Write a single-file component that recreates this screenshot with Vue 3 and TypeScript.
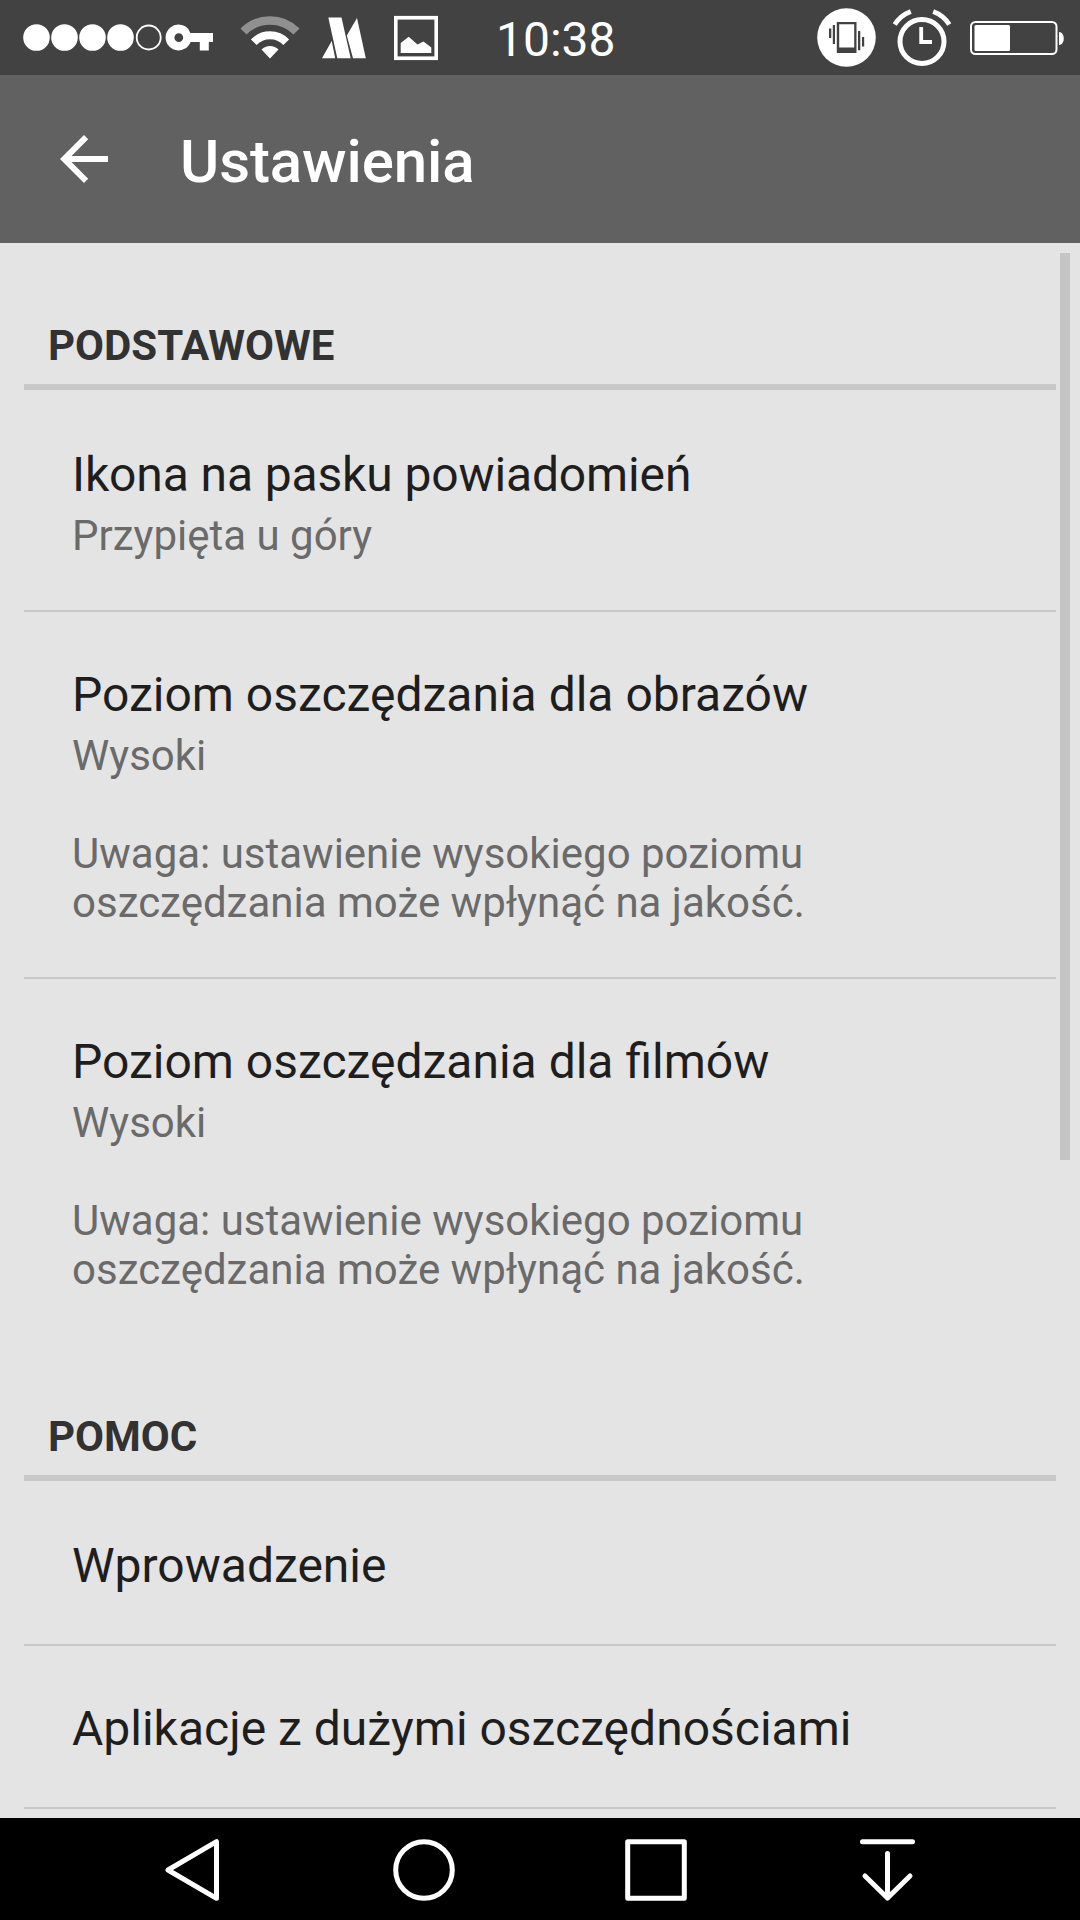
<script setup lang="ts">
interface SettingRow {
  title: string
  value?: string
  note?: string[]
  tight?: boolean
}

interface SettingSection {
  heading: string
  rows: SettingRow[]
}

const savingsNote: string[] = ['Uwaga: ustawienie wysokiego poziomu', 'oszczędzania może wpłynąć na jakość.']

const sections: SettingSection[] = [
  {
    heading: 'PODSTAWOWE',
    rows: [
      { title: 'Ikona na pasku powiadomień', value: 'Przypięta u góry', tight: true },
      { title: 'Poziom oszczędzania dla obrazów', value: 'Wysoki', note: savingsNote },
      { title: 'Poziom oszczędzania dla filmów', value: 'Wysoki', note: savingsNote },
    ],
  },
  {
    heading: 'POMOC',
    rows: [{ title: 'Wprowadzenie' }, { title: 'Aplikacje z dużymi oszczędnościami' }],
  },
]

const signalDots: number[] = [14, 42, 70, 98]
</script>

<template>
  <div class="screen">
    <div class="status">
      <svg class="signal" width="192" height="75" viewBox="0 0 192 75">
        <circle v-for="x in signalDots" :key="x" :cx="x - 0.5" cy="37.5" r="13.3" fill="#fff" />
        <circle cx="125.7" cy="37.5" r="12" fill="none" stroke="#fff" stroke-width="1.8" />
        <path
          fill="#fff"
          fill-rule="evenodd"
          d="M155.8 24.6a12.9 12.9 0 0 1 11.6 8.3H190v9h-4.2v8.6h-9v-8.6h-9.2a12.9 12.9 0 1 1-11.8-17.3zM155.8 33.2a4.4 4.4 0 1 0 0 8.8a4.4 4.4 0 0 0 0-8.8z"
        />
      </svg>
      <svg class="wifi" width="60" height="75" viewBox="0 0 60 75">
        <path d="M3.5 31.5A37.5 37.5 0 0 1 56.5 31.5" fill="none" stroke="#909090" stroke-width="8.6" />
        <path d="M13.8 42.2A22.5 22.5 0 0 1 46.2 42.2" fill="none" stroke="#fff" stroke-width="8" />
        <path d="M30 58.5L21.5 49.5A12 12 0 0 1 38.5 49.5Z" fill="#fff" />
      </svg>
      <svg class="brand" width="44" height="75" viewBox="0 0 44 75">
        <path fill="#fff" d="M0 58.3L9.7 41L13.2 58.3ZM6.3 17.5H19.5L28.7 58.3H15.3ZM24.8 35.5L35 18L43.8 58.3H31Z" />
      </svg>
      <svg class="picture" width="44" height="75" viewBox="0 0 44 75">
        <rect x="1.75" y="17.75" width="40.5" height="40.5" fill="none" stroke="#fff" stroke-width="3.7" />
        <path fill="#fff" d="M6.7 53V43L14.7 36.8L23.5 44.5L29.5 41.5L37.3 47.5V53Z" />
      </svg>
      <span class="clock">10:38</span>
      <svg class="vibrate" width="60" height="75" viewBox="0 0 60 75">
        <circle cx="29.5" cy="37.5" r="29.3" fill="#fff" />
        <path
          fill="#424242"
          fill-rule="evenodd"
          d="M19.8 22H39.5V53H19.8ZM22.2 24.3V47.5H37.2V24.3ZM15.8 25H18V44H15.8ZM12 28.5H14.3V38H12ZM41 31H43.3V50.3H41ZM45 37H47.2V46.5H45Z"
        />
      </svg>
      <svg class="alarm" width="60" height="75" viewBox="0 0 60 75">
        <g fill="none" stroke="#fff">
          <circle cx="30" cy="41.5" r="22" stroke-width="5" />
          <path d="M2.7 24.5A33 33 0 0 1 18.8 11.5M41.2 11.5A33 33 0 0 1 57.3 24.5" stroke-width="4.8" />
          <path d="M29.2 27V42H40" stroke-width="3.8" />
        </g>
      </svg>
      <svg class="battery" width="95" height="75" viewBox="0 0 95 75">
        <rect x="1" y="22" width="85.5" height="32" rx="4.5" fill="none" stroke="#fff" stroke-width="2" />
        <rect x="4.5" y="25" width="35.5" height="26" rx="1.5" fill="#fff" />
        <path d="M89 32C95.3 32 95.3 45 89 45Z" fill="#fff" />
      </svg>
    </div>

    <header class="toolbar">
      <svg class="back" width="48" height="48" viewBox="0 0 48 48">
        <path
          fill="#fff"
          d="M48 21H11.5L28.2 4.2L24 0L0 24L24 48L28.2 43.8L11.5 27H48Z"
        />
      </svg>
      <h1 class="toolbar-title">Ustawienia</h1>
    </header>

    <main class="content">
      <section v-for="section in sections" :key="section.heading" class="section">
        <h2 class="heading">{{ section.heading }}</h2>
        <div v-for="row in section.rows" :key="row.title" class="row" :class="{ simple: !row.value }">
          <div class="title" :class="{ tight: row.tight }">{{ row.title }}</div>
          <div v-if="row.value" class="detail value">{{ row.value }}</div>
          <div v-if="row.note" class="detail note">
            <div v-for="line in row.note" :key="line">{{ line }}</div>
          </div>
        </div>
      </section>
      <div class="scrollbar"></div>
    </main>

    <nav class="navbar">
      <svg class="nav-back" width="58" height="64" viewBox="0 0 58 64">
        <path d="M51.5 3.7V60.3L3 32Z" fill="none" stroke="#fff" stroke-width="5" stroke-linejoin="round" />
      </svg>
      <svg class="nav-home" width="64" height="64" viewBox="0 0 64 64">
        <circle cx="32" cy="32" r="28.3" fill="none" stroke="#fff" stroke-width="5" />
      </svg>
      <svg class="nav-recent" width="64" height="64" viewBox="0 0 64 64">
        <rect x="3.7" y="3.7" width="56.6" height="56.6" fill="none" stroke="#fff" stroke-width="5" stroke-linejoin="round" />
      </svg>
      <svg class="nav-pull" width="58" height="64" viewBox="0 0 58 64">
        <path
          d="M4.5 3.7H54.5M29.5 15.5V60M7 38L29.5 60L52 38"
          fill="none"
          stroke="#fff"
          stroke-width="5"
          stroke-linecap="round"
          stroke-linejoin="round"
        />
      </svg>
    </nav>
  </div>
</template>

<style>
body {
  margin: 0;
}
</style>

<style scoped>
.screen {
  display: flex;
  flex-direction: column;
  width: 1080px;
  height: 1920px;
  overflow: hidden;
  background: #e4e4e4;
  font-family: Roboto, "Noto Sans", sans-serif;
}
.status {
  display: flex;
  flex: none;
  align-items: center;
  height: 75px;
  background: #424242;
  color: #fff;
}
.status svg {
  display: block;
  flex: none;
}
.signal {
  margin-left: 23px;
}
.wifi {
  margin-left: 25px;
}
.brand {
  margin-left: 22px;
}
.picture {
  margin-left: 28px;
}
.clock {
  margin-left: 58px;
  padding-top: 5px;
  font-size: 48px;
  line-height: 56px;
}
.vibrate {
  margin-left: auto;
}
.alarm {
  margin-left: 15px;
}
.battery {
  margin-left: 18px;
  margin-right: 15px;
}
.toolbar {
  display: flex;
  flex: none;
  align-items: center;
  height: 168px;
  background: #616161;
}
.back {
  flex: none;
  margin-left: 60px;
}
.toolbar-title {
  margin: 0 0 0 72px;
  padding-top: 5px;
  color: #fff;
  font-size: 60px;
  font-weight: 500;
  line-height: 70px;
  letter-spacing: -0.1px;
}
.content {
  position: relative;
  flex: 1;
  min-height: 0;
  overflow: hidden;
  padding: 78px 24px 0;
}
.section + .section {
  padding-top: 68px;
}
.heading {
  margin: 0;
  padding: 0 24px 14px;
  border-bottom: 6px solid #c8c8c8;
  color: #323232;
  font-size: 42px;
  font-weight: 700;
  line-height: 49px;
}
.row {
  padding: 55px 48px 50px;
  border-bottom: 2px solid #c8c8c8;
}
.row:last-child:not(.simple) {
  border-bottom: 0;
}
.heading + .row {
  padding-top: 57px;
}
.title {
  color: #1e1e1e;
  font-size: 48px;
  line-height: 56px;
  white-space: nowrap;
}
.tight {
  letter-spacing: -0.13px;
}
.detail {
  color: #6a6a6a;
  font-size: 42px;
  line-height: 49px;
  white-space: nowrap;
}
.value {
  margin-top: 8px;
}
.note {
  margin-top: 49px;
}
.scrollbar {
  position: absolute;
  top: 10px;
  right: 10px;
  width: 10px;
  height: 907px;
  background: #c5c5c5;
}
.navbar {
  display: flex;
  flex: none;
  align-items: center;
  height: 102px;
  padding-top: 2px;
  box-sizing: border-box;
  background: #000;
}
.navbar svg {
  display: block;
  flex: none;
}
.nav-back {
  margin-left: 165px;
}
.nav-home {
  margin-left: 169px;
}
.nav-recent {
  margin-left: 168px;
}
.nav-pull {
  margin-left: 170px;
}
</style>
